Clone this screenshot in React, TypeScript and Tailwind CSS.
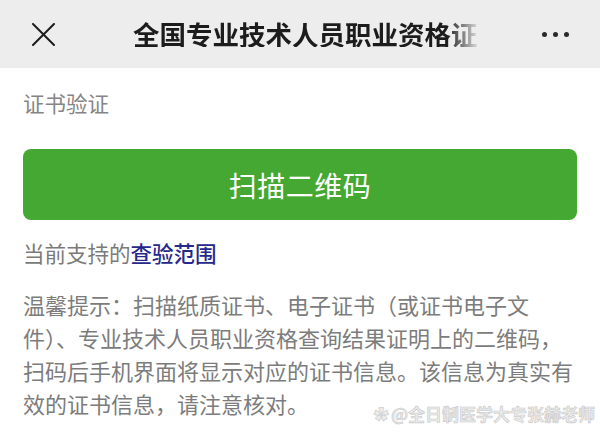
const cjk = { fontFamily: '"Noto Sans CJK SC", "Noto Sans", sans-serif' };

const fade = 'linear-gradient(to right, #000 0%, #000 91%, rgba(0,0,0,0.08) 100%)';

function Header() {
  return (
    <div className="h-[68px] bg-[#ededed] flex items-center pl-[32px] pr-[31px]">
      <svg width="23" height="23" viewBox="0 0 23 23" className="text-[#1c1c1c]">
        <path d="M1 1L22 22M22 1L1 22" stroke="currentColor" strokeWidth="2" strokeLinecap="round" />
      </svg>
      <div
        className="ml-[78px] whitespace-nowrap text-[26.5px] font-bold text-[#1c1c1c] leading-none"
        style={{ WebkitMaskImage: fade, maskImage: fade }}
      >
        全国专业技术人员职业资格证
      </div>
      <div className="ml-auto flex gap-[6px] items-center">
        <span className="w-[5px] h-[5px] rounded-full bg-[#2a2a2a]" />
        <span className="w-[5px] h-[5px] rounded-full bg-[#2a2a2a]" />
        <span className="w-[5px] h-[5px] rounded-full bg-[#2a2a2a]" />
      </div>
    </div>
  );
}

export default function App() {
  return (
    <div className="w-[600px] h-[438px] bg-white overflow-hidden relative" style={cjk}>
      <Header />
      <div className="px-[23px]">
        <p className="mt-[22px] text-[21.5px] leading-[26px] text-[#858585]">证书验证</p>
        <button className="mt-[33px] w-full h-[71px] rounded-[8px] bg-[#45a832] text-white text-[28px] tracking-[0.5px]">
          扫描二维码
        </button>
        <p className="mt-[19px] text-[21.5px] leading-[28px] text-[#7a7a7a]">
          当前支持的<span className="text-[#26288a] font-medium">查验范围</span>
        </p>
        <p className="mt-[21px] text-[22px] leading-[33px] text-[#7c7c7c]">
          温馨提示：扫描纸质证书、电子证书（或证书电子文件）、专业技术人员职业资格查询结果证明上的二维码，扫码后手机界面将显示对应的证书信息。该信息为真实有效的证书信息，请注意核对。
        </p>
      </div>
      <div
        className="absolute right-[5px] bottom-[16px] text-[17px] leading-none text-[#ececec] font-bold flex items-center gap-[2px]"
        style={{ WebkitTextStroke: '0.6px #c8c8c8' }}
      >
        <span className="text-[15px]">✿</span>
        <span>@全日制医学大专张赫老师</span>
      </div>
    </div>
  );
}
